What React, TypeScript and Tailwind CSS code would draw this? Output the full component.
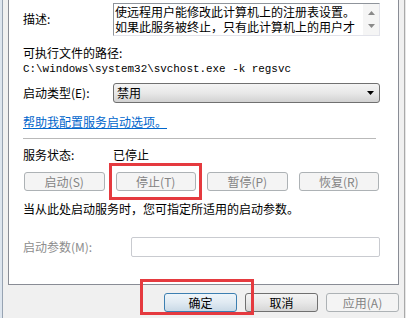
export default function App() {
  return (
    <div className="relative flex h-[318px] w-[406px] overflow-hidden bg-[#f0f0f0] font-['Noto_Sans_CJK_SC',sans-serif] text-[12px] leading-[16px] text-black">
      <div className="w-[2px] bg-[#dde5ee]" />
      <div className="w-[1px] bg-[#97a3b2]" />
      <div className="flex flex-1 flex-col px-[5px]">
        {/* tab page */}
        <div className="flex h-[285px] flex-col border border-t-0 border-[#898c95] bg-white pl-[14px]">
          <div className="mt-[3px] flex h-[33px]">
            <div className="w-[90px] pt-[8px]">描述:</div>
            <div className="flex w-[267px] border border-[#e2e3ea] border-l-[#8f949b] border-t-[#8f949b]">
              <div className="flex-1 overflow-hidden pl-[1px] leading-[15px]">
                <div className="whitespace-nowrap">使远程用户能修改此计算机上的注册表设置。</div>
                <div className="whitespace-nowrap">如果此服务被终止，只有此计算机上的用户才</div>
              </div>
              <div className="flex w-[16px] flex-col items-center justify-between bg-[#f5f5f5] py-[7px]">
                <svg width="7" height="4" viewBox="0 0 7 4">
                  <path d="M0 4 L3.5 0 L7 4 Z" fill="#8a8a8a" />
                </svg>
                <svg width="7" height="4" viewBox="0 0 7 4">
                  <path d="M0 0 L3.5 4 L7 0 Z" fill="#8a8a8a" />
                </svg>
              </div>
            </div>
          </div>

          <div className="mt-[9px] h-[16px]">可执行文件的路径:</div>
          <div className="mt-[1px] h-[14px] whitespace-nowrap font-['Liberation_Mono',monospace] text-[10.9px] leading-[14px]">
            C:\windows\system32\svchost.exe -k regsvc
          </div>

          <div className="mt-[7px] flex h-[20px] items-center">
            <div className="w-[90px]">启动类型(E):</div>
            <div className="flex h-[20px] w-[267px] items-center justify-between rounded-[3px] border border-[#707070] bg-gradient-to-b from-[#f4f4f4] via-[#e8e8e8] to-[#d2d2d2] pl-[3px] pr-[5px]">
              <span>禁用</span>
              <svg width="7" height="4" viewBox="0 0 7 4">
                <path d="M0 0 L3.5 4 L7 0 Z" fill="#000" />
              </svg>
            </div>
          </div>

          <div className="mt-[11px] h-[16px] text-[#0066cc] underline">帮助我配置服务启动选项。</div>

          <div className="mt-[8px] h-[1px] w-[353px] bg-[#b9b9b9]" />

          <div className="mt-[8px] flex h-[16px]">
            <div className="w-[90px]">服务状态:</div>
            <div>已停止</div>
          </div>

          <div className="ml-[1px] mt-[9px] grid h-[19px] w-[355px] grid-cols-4 gap-[11px]">
            {['启动(S)', '停止(T)', '暂停(P)', '恢复(R)'].map((t) => (
              <div
                key={t}
                className="flex items-center justify-center rounded-[3px] border border-[#adb2b5] bg-[#f4f4f4] text-[#838383]"
              >
                {t}
              </div>
            ))}
          </div>

          <div className="mt-[10px] h-[16px]">当从此处启动服务时，您可指定所适用的启动参数。</div>

          <div className="mt-[20px] flex h-[20px] items-center">
            <div className="w-[108px] text-[#8d8d8d]">启动参数(M):</div>
            <div className="h-[20px] w-[249px] rounded-[2px] border border-[#c9cbd0] bg-white" />
          </div>
        </div>

        {/* dialog buttons */}
        <div className="mt-[8px] flex justify-end gap-[8px]">
          <div className="flex h-[19px] w-[73px] items-center justify-center rounded-[3px] border border-[#3c7fb1] bg-gradient-to-b from-[#eef5fa] via-[#e0eaf2] to-[#c9d9e6]">
            确定
          </div>
          <div className="flex h-[19px] w-[73px] items-center justify-center rounded-[3px] border border-[#707070] bg-gradient-to-b from-[#f4f4f4] via-[#e8e8e8] to-[#d6d6d6]">
            取消
          </div>
          <div className="flex h-[19px] w-[73px] items-center justify-center rounded-[3px] border border-[#adb2b5] bg-[#f4f4f4] text-[#838383]">
            应用(A)
          </div>
        </div>
      </div>
      <div className="w-[1px] bg-[#a9a9a9]" />
      <div className="w-[1px] bg-[#e6e6e6]" />

      {/* red highlight marks */}
      <div className="absolute left-[109px] top-[163px] h-[37px] w-[93px] border-[3px] border-[#e53a3f]" />
      <div className="absolute left-[140px] top-[279px] h-[36px] w-[114px] border-[3px] border-[#e53a3f]" />
    </div>
  );
}
